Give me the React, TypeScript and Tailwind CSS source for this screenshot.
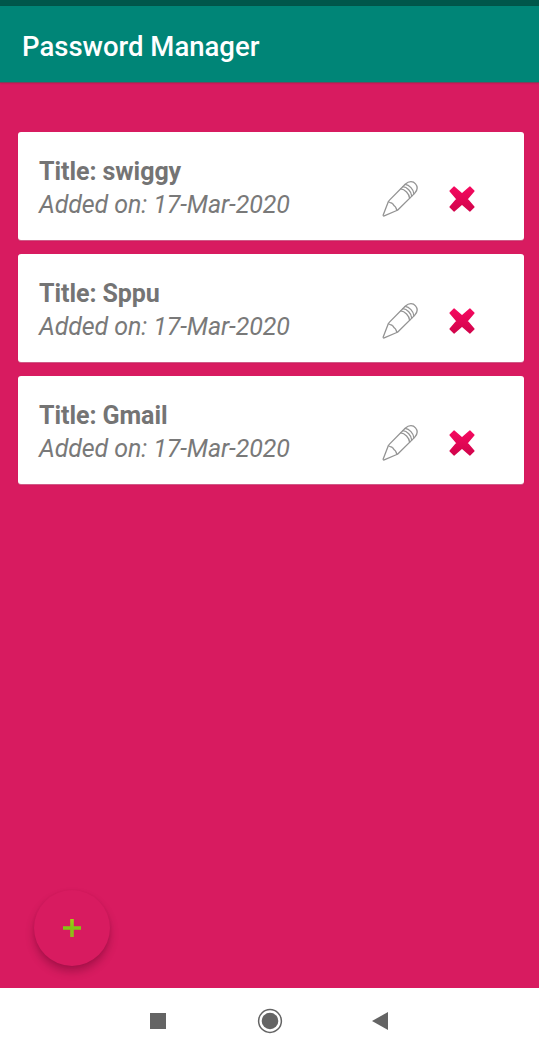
const entries = [
  { title: "swiggy", date: "17-Mar-2020" },
  { title: "Sppu", date: "17-Mar-2020" },
  { title: "Gmail", date: "17-Mar-2020" },
];

function PencilIcon() {
  return (
    <svg className="h-9 w-9" viewBox="0 0 36 36" fill="none" stroke="#949494" strokeWidth="1.3" strokeLinejoin="round" strokeLinecap="round">
      <path d="M1.2 34 L6.3 20.8 Q6.7 20 7.5 19.1 L23.2 3.2 C27.2 -.3 31.2 .2 33.5 2.9 C35.9 5.7 35.7 9 32.6 12.4 L16.8 28 Q15.9 29 14.8 29.5 L2.2 34.9 Q1 35.3 1.2 34 Z" />
      <path d="M6.5 20.6 C8.1 22.1 9.3 21.8 10.3 22.6 C11.5 23.5 11.6 24.6 12.8 25.3 C14.2 26.1 14 27.7 15 29.3" />
      <path d="M18.6 7.8 C22.8 8.2 27.3 12.6 27.6 17.2" />
      <path d="M20.9 5.7 C25 6.1 29.4 10.4 29.7 15" />
      <path d="M23.2 3.4 C27.3 3.9 31.6 8.2 31.9 12.9" />
    </svg>
  );
}

function DeleteIcon() {
  return (
    <svg className="h-[26px] w-[26px]" viewBox="0 0 26 26">
      <defs>
        <linearGradient id="cross" x1="0" y1="0" x2="0" y2="1">
          <stop offset="0" stopColor="#f5095f" />
          <stop offset="1" stopColor="#d1044b" />
        </linearGradient>
      </defs>
      <path
        d="M5 1.2 L13 8 L21 1.2 L24.8 5 L18 13 L24.8 21 L21 24.8 L13 18 L5 24.8 L1.2 21 L8 13 L1.2 5 Z"
        fill="url(#cross)"
        stroke="url(#cross)"
        strokeWidth="1.6"
        strokeLinejoin="round"
      />
    </svg>
  );
}

function EntryCard({ title, date }: { title: string; date: string }) {
  return (
    <li className="flex h-[108px] justify-between rounded-[3px] bg-white pr-[49px] pl-[21px] shadow-[0_1px_0_rgba(255,255,255,0.3),0_1px_1px_rgba(100,0,40,0.25)]">
      <div className="pt-[22.5px] text-[25px] leading-[33px] whitespace-nowrap text-[#747474]">
        <h2 className="font-bold tracking-[-0.06px]">Title: {title}</h2>
        <p className="tracking-[-0.1px] text-[#797979] italic">Added on: {date}</p>
      </div>
      <div className="flex items-start gap-[31px] pt-[48.5px]">
        <button aria-label="Edit"><PencilIcon /></button>
        <button aria-label="Delete" className="pt-[5px]"><DeleteIcon /></button>
      </div>
    </li>
  );
}

export default function App() {
  return (
    <div className="flex h-[1052px] w-[539px] flex-col overflow-hidden bg-[#d81b60] font-['Roboto',sans-serif]">
      <div className="h-[6px] shrink-0 bg-[#00574b]" />
      <header className="flex h-[76px] shrink-0 items-center bg-[#008577] px-[22px] pt-[6px] shadow-[0_1px_0_rgba(100,80,90,0.8),0_1px_2px_rgba(80,0,40,0.3)]">
        <h1 className="text-[27.5px] font-medium text-white">Password Manager</h1>
      </header>
      <main className="flex flex-1 flex-col justify-between pt-[50.4px] pr-[15px] pb-[22px] pl-[18px]">
        <ul className="flex flex-col gap-[14px]">
          {entries.map((entry) => (
            <EntryCard key={entry.title} {...entry} />
          ))}
        </ul>
        <button aria-label="Add" className="ml-4 flex h-[76px] w-[76px] items-center justify-center rounded-full bg-[#d81b60] shadow-[0_6px_8px_rgba(80,0,35,0.32),0_1px_3px_rgba(80,0,35,0.1)]">
          <svg className="h-[19px] w-[19px]" viewBox="0 0 19 19">
            <defs>
              <linearGradient id="plus" x1="0" y1="0" x2="0" y2="1">
                <stop offset="0" stopColor="#a6cd16" />
                <stop offset=".5" stopColor="#7fc812" />
                <stop offset="1" stopColor="#98b51b" />
              </linearGradient>
            </defs>
            <path d="M7.2 0 H10.8 V7.2 H18 V10.8 H10.8 V18 H7.2 V10.8 H0 V7.2 H7.2 Z" fill="url(#plus)" />
          </svg>
        </button>
      </main>
      <nav className="flex h-[64px] shrink-0 items-center justify-between bg-white pt-px pr-[151px] pl-[150px]">
        <button aria-label="Recent apps" className="h-4 w-4 bg-[#646464]" />
        <button aria-label="Home" className="ml-[1px]">
          <svg className="h-[26px] w-[26px]" viewBox="0 0 26 26">
            <circle cx="13" cy="13" r="11.4" fill="none" stroke="#646464" strokeWidth="1.5" />
            <circle cx="13" cy="13" r="8.3" fill="#646464" />
          </svg>
        </button>
        <button aria-label="Back">
          <svg className="h-[18px] w-4" viewBox="0 0 16 18">
            <path d="M0 9 L16 0 V18 Z" fill="#646464" />
          </svg>
        </button>
      </nav>
    </div>
  );
}
